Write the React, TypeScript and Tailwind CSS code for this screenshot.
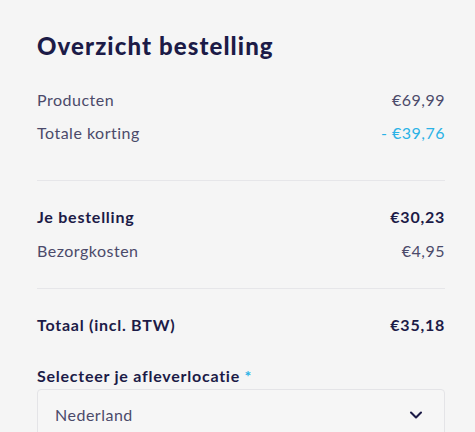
import { ChevronDown } from 'lucide-react'

const rowCls = 'flex items-center justify-between h-6 text-[16px] leading-6 tracking-[0.5px]'
const boldCls = 'font-bold text-[#1c1b47] tracking-[0.75px]'

export default function App() {
  return (
    <div
      className="min-h-[432px] w-full bg-[#f5f5f5] pl-[37px] pr-[30px] pt-[30px] text-[#4b4a6a]"
      style={{ fontFamily: 'Lato, "Open Sans", sans-serif' }}
    >
      <h2 className="h-8 text-[24px] leading-8 font-black tracking-[1.1px] text-[#1c1b47]">
        Overzicht bestelling
      </h2>

      {/* Subtotal */}
      <div className="mt-[26px] flex flex-col gap-[9px]">
        <div className={rowCls}>
          <span>Producten</span>
          <span>€69,99</span>
        </div>
        <div className={rowCls}>
          <span>Totale korting</span>
          <span className="text-[#2ab2e6]">- €39,76</span>
        </div>
      </div>

      <div className="mt-[35px] h-px bg-[#e6e6e9]" />

      <div className="mt-6 flex flex-col gap-[10px]">
        <div className={`${rowCls} ${boldCls}`}>
          <span>Je bestelling</span>
          <span>€30,23</span>
        </div>
        <div className={rowCls}>
          <span>Bezorgkosten</span>
          <span>€4,95</span>
        </div>
      </div>

      <div className="mt-[25px] h-px bg-[#e6e6e9]" />

      <div className={`mt-6 ${rowCls} ${boldCls}`}>
        <span>Totaal (incl. BTW)</span>
        <span>€35,18</span>
      </div>

      {/* Delivery location */}
      <label className={`mt-[27px] block h-6 text-[16px] leading-6 ${boldCls}`}>
        Selecteer je afleverlocatie <span className="text-[#2ab2e6]">*</span>
      </label>
      <div className="mt-px flex h-[52px] items-center justify-between rounded border border-[#e4e4e7] bg-[#f6f6f6] pl-[17px] pr-[18px]">
        <span className="text-[16px] tracking-[0.5px] text-[#4b4a6a]">Nederland</span>
        <ChevronDown className="size-5 text-[#1c1b47]" strokeWidth={2.5} />
      </div>
    </div>
  )
}
